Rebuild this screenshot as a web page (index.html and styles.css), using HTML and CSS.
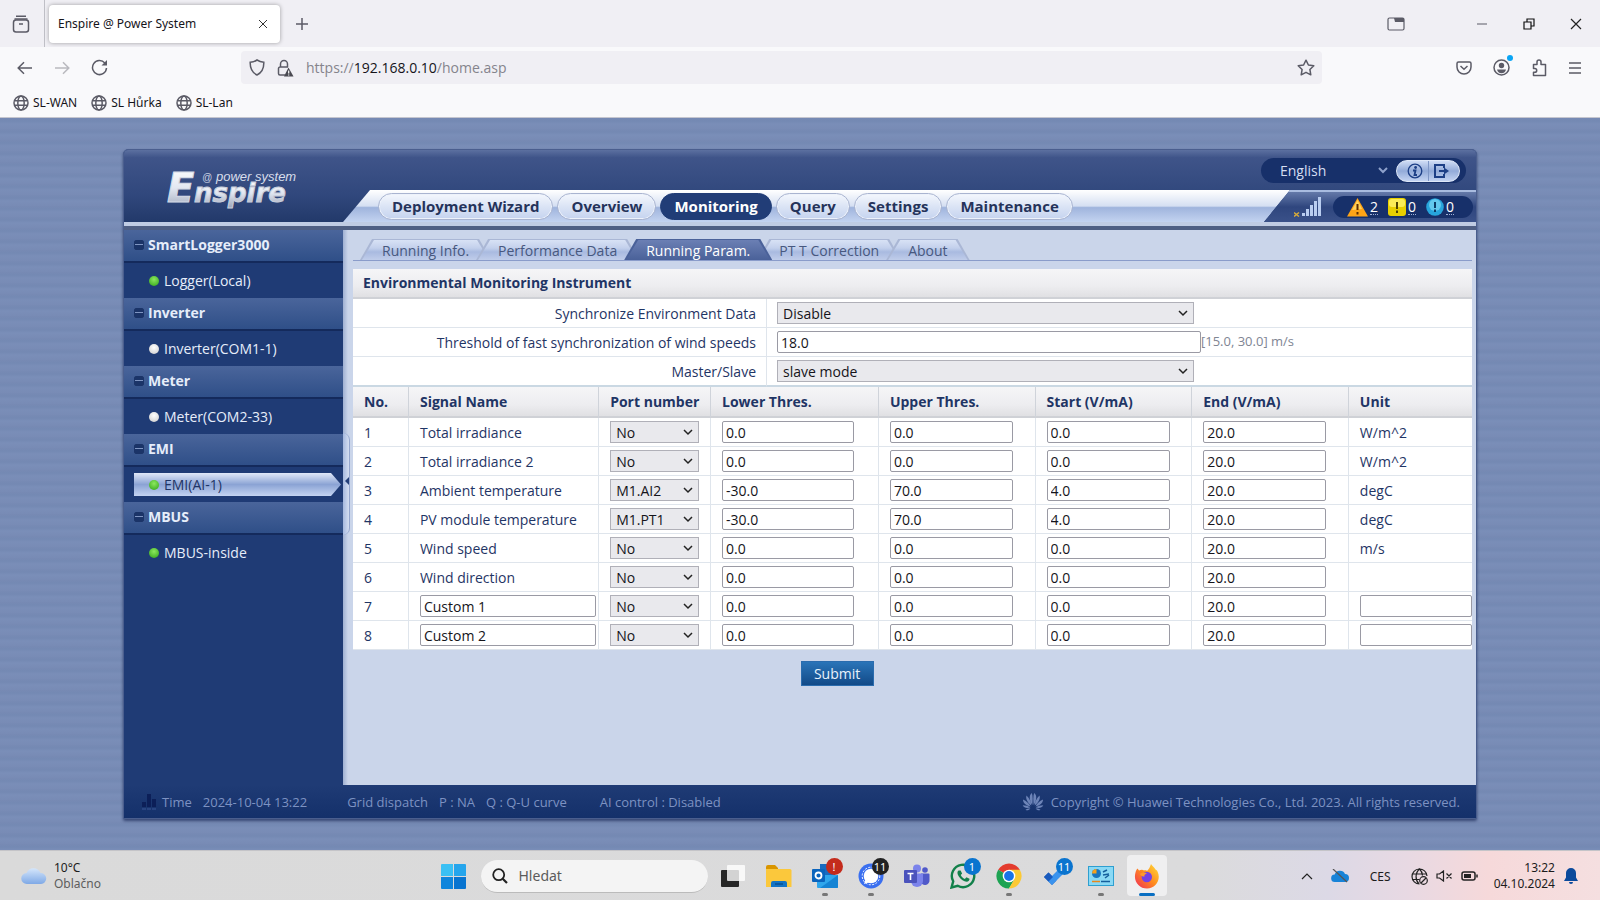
FILE: index.html
```html
<!DOCTYPE html>
<html lang="en">
<head>
<meta charset="utf-8">
<meta name="viewport" content="width=device-width, initial-scale=1.0">
<title>Enspire @ Power System</title>
<link rel="stylesheet" href="styles.css">
</head>
<body>

<!-- browser window -->
<div class="tabbar">
  <button class="icon-btn recent" aria-label="Recent tabs"><svg width="18" height="18" viewBox="0 0 18 18"><path d="M4 1.2h10M2.5 4h13" /><rect x="1.5" y="5" width="15" height="12" rx="2.5"/><path d="M7 9h4"/></svg></button>
  <div class="tab"><span>Enspire @ Power System</span><button class="icon-btn" aria-label="Close tab"><svg width="10" height="10" viewBox="0 0 10 10"><path d="M1 1l8 8M9 1L1 9"/></svg></button></div>
  <button class="icon-btn newtab" aria-label="New tab"><svg width="14" height="14" viewBox="0 0 14 14"><path d="M7 1v12M1 7h12"/></svg></button>
  <div class="window-buttons">
    <button class="icon-btn" aria-label="Firefox view"><svg width="18" height="14" viewBox="0 0 18 14"><rect x="1" y="1" width="16" height="12" rx="1.5"/><path d="M7 1h10v4H8z" fill="#5b5b66" stroke="none"/></svg></button>
    <button class="icon-btn" aria-label="Minimize"><svg width="12" height="12" viewBox="0 0 12 12"><path d="M1 6h10" stroke-width="1"/></svg></button>
    <button class="icon-btn" aria-label="Restore"><svg width="12" height="12" viewBox="0 0 12 12"><path d="M1 4h7v7H1zM4 4V1h7v7H8" stroke="#111"/></svg></button>
    <button class="icon-btn" aria-label="Close"><svg width="12" height="12" viewBox="0 0 12 12"><path d="M1 1l10 10M11 1L1 11" stroke="#222"/></svg></button>
  </div>
</div>
<div class="toolbar">
  <div class="nav-buttons">
    <button class="icon-btn" aria-label="Back"><svg width="16" height="14" viewBox="0 0 16 14"><path d="M15 7H1.5M7 1.2L1.2 7 7 12.8"/></svg></button>
    <button class="icon-btn faded" aria-label="Forward"><svg width="16" height="14" viewBox="0 0 16 14"><path d="M1 7h13.5M9 1.2L14.8 7 9 12.8"/></svg></button>
    <button class="icon-btn" aria-label="Reload"><svg width="17" height="17" viewBox="0 0 17 17"><path d="M13.8 4A7 7 0 1 0 15.5 9"/><path d="M16 1v5.5h-5.500z" fill="#5b5b66" stroke="none"/></svg></button>
  </div>
  <div class="urlbar">
    <svg width="16" height="17" viewBox="0 0 16 17"><path d="M8 1c2 1.300 4.500 2 6.800 2.200C15 9 13 13.500 8 16 3 13.500 1 9 1.200 3.200 3.500 3 6 2.300 8 1z"/></svg>
    <svg width="17" height="18" viewBox="0 0 17 18"><path d="M8 16H3a1.500 1.500 0 0 1-1.500-1.500V9.500A1.500 1.500 0 0 1 3 8h8M3.500 8V5a3.500 3.500 0 0 1 7 0v3"/><path d="M11.500 8.500l5 9h-9.500z" fill="#4a4a52" stroke="none"/><path d="M11.700 11.500v3M11.700 15.500v1" stroke="#fff" stroke-width="1.200"/></svg>
    <span class="url">https://<b>192.168.0.10</b>/home.asp</span>
    <svg width="18" height="17" viewBox="0 0 18 17"><path d="M9 1.200l2.400 4.800 5.400.8-3.900 3.700.9 5.300L9 13.300l-4.800 2.500.9-5.300L1.200 6.800 6.600 6z" stroke-linejoin="round"/></svg>
  </div>
  <div class="tool-icons">
    <button class="icon-btn" aria-label="Pocket"><svg width="16" height="14" viewBox="0 0 16 14"><path d="M2.500 1h11a1.500 1.500 0 0 1 1.500 1.500V6A7 7 0 0 1 1 6V2.500A1.500 1.500 0 0 1 2.500 1z"/><path d="M4.500 5L8 8.300 11.500 5"/></svg></button>
    <button class="icon-btn account" aria-label="Account"><svg width="17" height="17" viewBox="0 0 17 17"><circle cx="8.500" cy="8.500" r="7.500"/><g fill="#5b5b66" stroke="none"><circle cx="8.500" cy="6.500" r="2.700"/><path d="M4 10.500h9a4.600 4.600 0 0 1-9 0z"/></g></svg><i class="dot"></i></button>
    <button class="icon-btn" aria-label="Extensions"><svg width="16" height="18" viewBox="0 0 16 18"><path d="M2.500 5.500h3.500V3a2 2 0 0 1 4 0v2.500h4.500v11h-12v-3.200h1.300a1.900 1.900 0 0 0 0-3.800H2.500z" stroke-linejoin="round"/></svg></button>
    <button class="icon-btn" aria-label="Menu"><svg width="14" height="12" viewBox="0 0 14 12"><path d="M1 1h12M1 6h12M1 11h12"/></svg></button>
  </div>
</div>
<nav class="bookmarks">
  <a href="#"><svg width="16" height="16" viewBox="0 0 16 16"><circle cx="8" cy="8" r="7"/><ellipse cx="8" cy="8" rx="3.200" ry="7"/><path d="M1.500 5.700h13M1.500 10.300h13"/></svg>SL-WAN</a>
  <a href="#"><svg width="16" height="16" viewBox="0 0 16 16"><circle cx="8" cy="8" r="7"/><ellipse cx="8" cy="8" rx="3.200" ry="7"/><path d="M1.500 5.700h13M1.500 10.300h13"/></svg>SL Hůrka</a>
  <a href="#"><svg width="16" height="16" viewBox="0 0 16 16"><circle cx="8" cy="8" r="7"/><ellipse cx="8" cy="8" rx="3.200" ry="7"/><path d="M1.500 5.700h13M1.500 10.300h13"/></svg>SL-Lan</a>
</nav>

<!-- web page -->
<main class="page">
<div class="app">
  <header class="app-header">
    <div class="header-top">
      <svg class="logo" width="140" height="48" viewBox="0 0 140 48">
        <defs><linearGradient id="silver" x1="0" y1="0" x2="0" y2="1"><stop offset="0" stop-color="#fff"/><stop offset=".5" stop-color="#e2e7f1"/><stop offset="1" stop-color="#9ba4b8"/></linearGradient></defs>
        <g font-style="italic" font-weight="bold" font-family="DejaVu Sans, sans-serif">
          <text x="3" y="35" font-size="40" fill="url(#silver)" stroke="#d4dae6" stroke-width="1">E</text>
          <text x="30" y="35" font-size="26" fill="url(#silver)" stroke="#c8cedb" stroke-width="1">nspire</text>
        </g>
        <g font-style="italic" font-family="Liberation Sans, sans-serif">
          <text x="38" y="14" font-size="10" fill="#c5cde0">@</text>
          <text x="52" y="14" font-size="13" fill="#d8deeb">power system</text>
        </g>
      </svg>
      <div class="language">
        <select aria-label="Language"><option>English</option></select>
        <div class="head-buttons">
          <button aria-label="About"><svg width="16" height="16" viewBox="0 0 16 16"><circle cx="8" cy="8" r="6.800" stroke-width="1.300"/><circle cx="8.600" cy="4.500" r="1.400" fill="#1d3f86" stroke="none"/><path d="M6 7.500h2.500l-1 4.500H10" stroke-width="1.800"/></svg></button>
          <button aria-label="Log out"><svg width="16" height="16" viewBox="0 0 16 16"><path d="M11 5V2H2v12h9v-3" stroke-width="2"/><path d="M6 8h6" stroke-width="2"/><path d="M11 4.500L16 8l-5 3.500z" fill="#1d3f86" stroke="none"/></svg></button>
        </div>
      </div>
    </div>
    <div class="header-menu">
      <nav class="menu">
        <a href="#">Deployment Wizard</a>
        <a href="#">Overview</a>
        <a href="#" class="active">Monitoring</a>
        <a href="#">Query</a>
        <a href="#">Settings</a>
        <a href="#">Maintenance</a>
      </nav>
      <div class="status">
        <svg width="28" height="20" viewBox="0 0 28 20"><path d="M0 15.500l5 4M5 15.500l-5 4" stroke="#d3a93c" stroke-width="1.500"/><path d="M8 16h3v3H8zM12 12h3v7h-3zM16 8h3v11h-3zM20 4h3v15h-3zM24 0h3v19h-3z" fill="#b9cdf0"/></svg>
        <div class="alarms">
          <svg width="21" height="19" viewBox="0 0 21 19"><path d="M10.500 0L21 18.500H0z" fill="#ffa416"/><path d="M10.500 2L15 11 5 12z" fill="#ffd35c"/><path d="M10.500 6v6M10.500 14v2.500" stroke="#5c2c00" stroke-width="2"/></svg><a href="#">2</a>
          <svg width="18" height="19" viewBox="0 0 18 19"><rect width="18" height="18" rx="3" fill="#e8cf00"/><rect x="1" y="1" width="16" height="8" rx="3" fill="#fbec56"/><path d="M9 4v7M9 12.500V15" stroke="#4d4300" stroke-width="2"/></svg><a href="#">0</a>
          <svg width="18" height="18" viewBox="0 0 18 18"><circle cx="9" cy="9" r="8.800" fill="#27a5dc"/><circle cx="9" cy="7" r="6" fill="#62c9ee"/><path d="M9 4v6M9 11.500V14" stroke="#0c3c66" stroke-width="2"/></svg><a href="#">0</a>
        </div>
      </div>
    </div>
  </header>

  <div class="app-body">
    <aside class="sidebar">
      <h3><i class="minus"></i>SmartLogger3000</h3>
      <a href="#"><i class="led on"></i>Logger(Local)</a>
      <h3><i class="minus"></i>Inverter</h3>
      <a href="#"><i class="led"></i>Inverter(COM1-1)</a>
      <h3><i class="minus"></i>Meter</h3>
      <a href="#"><i class="led"></i>Meter(COM2-33)</a>
      <h3><i class="minus"></i>EMI</h3>
      <a href="#" class="selected"><i class="led on"></i>EMI(AI-1)</a>
      <h3><i class="minus"></i>MBUS</h3>
      <a href="#"><i class="led on"></i>MBUS-inside</a>
      <button class="collapse" aria-label="Collapse sidebar"></button>
    </aside>

    <section class="content">
      <nav class="subtabs">
        <a href="#"><span>Running Info.</span></a>
        <a href="#"><span>Performance Data</span></a>
        <a href="#" class="active"><span>Running Param.</span></a>
        <a href="#"><span>PT T Correction</span></a>
        <a href="#"><span>About</span></a>
      </nav>

      <h2>Environmental Monitoring Instrument</h2>
      <table class="params">
        <tr><th><label for="sync">Synchronize Environment Data</label></th><td><select id="sync"><option>Disable</option></select></td></tr>
        <tr><th><label for="wind">Threshold of fast synchronization of wind speeds</label></th><td><input id="wind" type="text" value="18.0"><span class="hint">[15.0, 30.0] m/s</span></td></tr>
        <tr><th><label for="master">Master/Slave</label></th><td><select id="master"><option>slave mode</option></select></td></tr>
      </table>

      <table class="signals">
        <colgroup><col class="c-no"><col class="c-name"><col class="c-port"><col class="c-lower"><col class="c-mid"><col class="c-mid"><col class="c-mid"><col class="c-unit"></colgroup>
        <thead>
          <tr><th>No.</th><th>Signal Name</th><th>Port number</th><th>Lower Thres.</th><th>Upper Thres.</th><th>Start (V/mA)</th><th>End (V/mA)</th><th>Unit</th></tr>
        </thead>
        <tbody>
          <tr><td>1</td><td>Total irradiance</td><td><select aria-label="Port 1"><option>No</option></select></td><td><input aria-label="Lower 1" class="wide" value="0.0"></td><td><input aria-label="Upper 1" value="0.0"></td><td><input aria-label="Start 1" value="0.0"></td><td><input aria-label="End 1" value="20.0"></td><td>W/m^2</td></tr>
          <tr><td>2</td><td>Total irradiance 2</td><td><select aria-label="Port 2"><option>No</option></select></td><td><input aria-label="Lower 2" class="wide" value="0.0"></td><td><input aria-label="Upper 2" value="0.0"></td><td><input aria-label="Start 2" value="0.0"></td><td><input aria-label="End 2" value="20.0"></td><td>W/m^2</td></tr>
          <tr><td>3</td><td>Ambient temperature</td><td><select aria-label="Port 3"><option>M1.AI2</option></select></td><td><input aria-label="Lower 3" class="wide" value="-30.0"></td><td><input aria-label="Upper 3" value="70.0"></td><td><input aria-label="Start 3" value="4.0"></td><td><input aria-label="End 3" value="20.0"></td><td>degC</td></tr>
          <tr><td>4</td><td>PV module temperature</td><td><select aria-label="Port 4"><option>M1.PT1</option></select></td><td><input aria-label="Lower 4" class="wide" value="-30.0"></td><td><input aria-label="Upper 4" value="70.0"></td><td><input aria-label="Start 4" value="4.0"></td><td><input aria-label="End 4" value="20.0"></td><td>degC</td></tr>
          <tr><td>5</td><td>Wind speed</td><td><select aria-label="Port 5"><option>No</option></select></td><td><input aria-label="Lower 5" class="wide" value="0.0"></td><td><input aria-label="Upper 5" value="0.0"></td><td><input aria-label="Start 5" value="0.0"></td><td><input aria-label="End 5" value="20.0"></td><td>m/s</td></tr>
          <tr><td>6</td><td>Wind direction</td><td><select aria-label="Port 6"><option>No</option></select></td><td><input aria-label="Lower 6" class="wide" value="0.0"></td><td><input aria-label="Upper 6" value="0.0"></td><td><input aria-label="Start 6" value="0.0"></td><td><input aria-label="End 6" value="20.0"></td><td></td></tr>
          <tr><td>7</td><td><input aria-label="Name 7" class="full" value="Custom 1"></td><td><select aria-label="Port 7"><option>No</option></select></td><td><input aria-label="Lower 7" class="wide" value="0.0"></td><td><input aria-label="Upper 7" value="0.0"></td><td><input aria-label="Start 7" value="0.0"></td><td><input aria-label="End 7" value="20.0"></td><td><input aria-label="Unit 7" class="full" value=""></td></tr>
          <tr><td>8</td><td><input aria-label="Name 8" class="full" value="Custom 2"></td><td><select aria-label="Port 8"><option>No</option></select></td><td><input aria-label="Lower 8" class="wide" value="0.0"></td><td><input aria-label="Upper 8" value="0.0"></td><td><input aria-label="Start 8" value="0.0"></td><td><input aria-label="End 8" value="20.0"></td><td><input aria-label="Unit 8" class="full" value=""></td></tr>
        </tbody>
      </table>
      <button class="submit">Submit</button>
    </section>
  </div>

  <footer class="app-footer">
    <svg width="15" height="16" viewBox="0 0 15 16"><path d="M0 8h4v5H0zM5 0h4v13H5zM10 5h4v8h-4z" fill="#0c1f58"/><path d="M0 15h4M5 15h4M10 15h4" stroke="#3a5796"/></svg>
    <span>Time</span><span class="time">2024-10-04 13:22</span>
    <span class="grid">Grid dispatch</span><span>P : NA</span><span>Q : Q-U curve</span><span class="ai">AI control : Disabled</span>
    <span class="copy"><svg width="22" height="18" viewBox="0 0 22 18"><g fill="#6d84b8"><path d="M10.300 12C7 7 7 2 9.800 0c1.200 3 1 8 .5 12zM11.700 12C15 7 15 2 12.200 0c-1.200 3-1 8-.5 12zM9.300 12.500C5 9 3.500 5.500 4.500 2.500 7.500 5 9 9 9.300 12.500zM12.700 12.500c4.300-3.500 5.800-7 4.800-10-3 2.500-4.500 6.500-4.800 10zM8.500 13.500C4 12.500 1 10 1 6.500c3.500 1.500 6 4 7.500 7zM13.500 13.500c4.500-1 7.500-3.500 7.500-7-3.500 1.500-6 4-7.500 7zM8.300 14.500c-3.500 1-6.300.5-7.600-2.300 3 0 5.600.8 7.600 2.300zM13.700 14.500c3.500 1 6.300.5 7.600-2.300-3 0-5.600.8-7.600 2.300zM8.500 15.500c-1.500 1.800-3.500 2.300-5 1.300 1.400-1 3.200-1.500 5-1.300zM13.500 15.500c1.500 1.800 3.500 2.300 5 1.300-1.400-1-3.200-1.500-5-1.300z"/></g></svg>Copyright © Huawei Technologies Co., Ltd. 2023. All rights reserved.</span>
  </footer>
</div>
</main>

<!-- windows taskbar -->
<div class="taskbar">
  <div class="weather">
    <svg width="28" height="22" viewBox="0 0 28 22"><defs><linearGradient id="cl" x1="0" y1="0" x2="0" y2="1"><stop offset="0" stop-color="#d5e6fb"/><stop offset="1" stop-color="#7fa9e6"/></linearGradient></defs><path d="M7 19a5.500 5.500 0 0 1-.5-11A7.500 7.500 0 0 1 20.500 8 5.500 5.500 0 0 1 21 19z" fill="url(#cl)"/></svg>
    <div><div>10°C</div><div class="muted">Oblačno</div></div>
  </div>
  <div class="apps">
    <button class="app-btn" aria-label="Start"><svg width="25" height="25" viewBox="0 0 25 25"><path d="M0 1a1 1 0 0 1 1-1h11v12H0z" fill="#3ac0f4"/><path d="M13 0h11a1 1 0 0 1 1 1v11H13z" fill="#25a5ec"/><path d="M0 13h12v12H1a1 1 0 0 1-1-1z" fill="#0f85dc"/><path d="M13 13h12v11a1 1 0 0 1-1 1H13z" fill="#0874d0"/></svg></button>
    <label class="search"><svg width="16" height="16" viewBox="0 0 16 16"><circle cx="6.700" cy="6.700" r="5.500"/><path d="M10.700 10.700L15 15" stroke-width="2.200"/></svg><input type="text" placeholder="Hledat" aria-label="Hledat"></label>
    <button class="app-btn" aria-label="Task view"><svg width="26" height="26" viewBox="0 0 26 26"><rect x="1" y="7" width="18" height="17" rx="1" fill="#262626"/><rect x="7" y="2" width="18" height="16" rx="1" fill="#fff" fill-opacity=".8"/></svg></button>
    <button class="app-btn" aria-label="Explorer"><svg width="26" height="26" viewBox="0 0 26 26"><path d="M0 4a2 2 0 0 1 2-2h7l3 3v6H0z" fill="#d99500"/><path d="M0 6h24a1.500 1.500 0 0 1 1.500 1.500V24H0z" fill="#fbc83c"/><path d="M5 24v-4a2 2 0 0 1 2-2h12a2 2 0 0 1 2 2v4z" fill="#1273c4"/><path d="M9 21h8" stroke="#0a4f90" stroke-width="1.500"/></svg></button>
    <button class="app-btn running" aria-label="Outlook"><svg width="26" height="26" viewBox="0 0 26 26"><rect x="8" y="1" width="15" height="17" fill="#1a6bbf"/><path d="M5 12h21v12a1 1 0 0 1-1 1H6a1 1 0 0 1-1-1z" fill="#2fa6ec"/><path d="M26 12L8 25h17a1 1 0 0 0 1-1z" fill="#1584d4"/><rect y="6" width="13" height="13" rx="1" fill="#0a64bd"/><circle cx="6.500" cy="12.500" r="3" fill="none" stroke="#fff" stroke-width="1.800"/></svg><span class="badge red">!</span></button>
    <button class="app-btn running" aria-label="Signal"><svg width="26" height="26" viewBox="0 0 26 26"><circle cx="13" cy="13" r="12.500" fill="#3a6ff0"/><circle cx="13" cy="13" r="8.800" fill="none" stroke="#fff" stroke-width="1" stroke-dasharray="2 1.500"/><circle cx="13" cy="13" r="7.300" fill="#fff"/><path d="M6 21l2-6 4 4z" fill="#fff"/></svg><span class="badge black">11</span></button>
    <button class="app-btn" aria-label="Teams"><svg width="26" height="26" viewBox="0 0 26 26"><circle cx="13" cy="5.500" r="4" fill="#7b83eb"/><circle cx="21" cy="7" r="2.800" fill="#5059c9"/><path d="M17 10.500h7.500a1 1 0 0 1 1 1V17a4.500 4.500 0 0 1-9 1z" fill="#5059c9"/><path d="M7 10.500h12V18a6 6 0 0 1-12 0z" fill="#7b83eb"/><rect y="7" width="13" height="13" rx="1" fill="#4b53bc"/><path d="M3.500 10.500h6M6.500 10.500v6.500" stroke="#fff" stroke-width="1.600"/></svg></button>
    <button class="app-btn" aria-label="WhatsApp"><svg width="26" height="26" viewBox="0 0 26 26"><path d="M1.500 24.500l1.700-6.200A11.200 11.200 0 1 1 7.700 22.800z" fill="#dcdcdc" stroke="#12804a" stroke-width="2.400"/><path d="M8.500 7.500c-1.500 1-1.500 3.500.5 6.300s5 5 7.500 5c2 0 3.200-1.500 3-3l-3-1.600-1.700 1.700c-2-.8-3.400-2.300-4-4l1.300-1.500-1.500-3z" fill="#12804a"/></svg><span class="badge blue">1</span></button>
    <button class="app-btn running" aria-label="Chrome"><svg width="26" height="26" viewBox="0 0 26 26"><path d="M13 13L2.200 6.700A12.500 12.500 0 0 1 23.800 6.700z" fill="#e33b2e"/><path d="M13 13L2.200 6.700A12.500 12.500 0 0 0 13 25.500l5.400-9z" fill="#1da353"/><path d="M13 6.700h10.800A12.500 12.500 0 0 1 13 25.500l5.400-9.400z" fill="#fcc934"/><circle cx="13" cy="13" r="6.300" fill="#fff"/><circle cx="13" cy="13" r="4.900" fill="#1a73e8"/></svg></button>
    <button class="app-btn" aria-label="To Do"><svg width="26" height="26" viewBox="0 0 26 26"><path d="M2 14l4.500-4.500 8 8L10 22z" fill="#195abd"/><path d="M10 22L24.500 7.500 20 3 5.500 17.500z" fill="#3a93ee"/><path d="M2 14l4.500-4.500 4.500 4.500-4.500 4.500z" fill="#195abd"/></svg><span class="badge blue">11</span></button>
    <button class="app-btn running" aria-label="Control panel"><svg width="26" height="20" viewBox="0 0 26 20"><rect x=".5" y=".5" width="25" height="19" fill="#8ad9f5" stroke="#2e9fd0"/><circle cx="8.500" cy="7.500" r="4.500" fill="#1976c0"/><path d="M8.500 7.500V3A4.500 4.500 0 0 0 4 7.500z" fill="#f7a11c"/><path d="M15 6l4-2M15 9l6-1M17 12l4-3" stroke="#155f9c" stroke-width="1.500"/><path d="M4 15.500h8" stroke="#e8871a" stroke-width="1.500"/><path d="M13 15.500h9" stroke="#155f9c" stroke-width="1.500"/></svg></button>
    <button class="app-btn running current" aria-label="Firefox"><svg width="26" height="26" viewBox="0 0 26 26"><defs><linearGradient id="ff" x1="1" y1="0" x2="0" y2="1"><stop offset="0" stop-color="#ffe13b"/><stop offset=".5" stop-color="#ff8a1e"/><stop offset="1" stop-color="#f0275c"/></linearGradient></defs><path d="M17 1c1 2 3 3 4.500 5.500 1 .5 1.500 1 2 2 4 8-2 17-10.500 17C5 25.500-1 18 1.500 9.500 2 7.500 2.500 6.500 3.500 5.500L5 7.500c2-1 4-1 5 0 2-.500 3 .5 3 .5 2-2 3-4 4-7z" fill="url(#ff)"/><circle cx="12.800" cy="14" r="5.200" fill="#7542e5"/><path d="M6 11c2-2 5-2 7-.5-2 .5-3 1.500-2.500 3-2 0-3.500-.5-4.500-2.500z" fill="#ff9a2e"/></svg></button>
  </div>
  <div class="tray">
    <svg width="12" height="8" viewBox="0 0 12 8"><path d="M1 7l5-5 5 5"/></svg>
    <svg class="cloud" width="18" height="14" viewBox="0 0 18 14"><path d="M4 13a3.700 3.700 0 0 1-.3-7.400A5.500 5.500 0 0 1 14 5a4 4 0 0 1 0 8z" fill="#1783d8" stroke="none"/><path d="M2 0l14 13" stroke="#555"/></svg>
    <span class="lang">CES</span>
    <svg width="17" height="17" viewBox="0 0 17 17"><path d="M8.500 16A7.500 7.500 0 1 1 16 8M1.500 6h14M1.500 11.500h7M8.500 1C4 5 4 12 8 16M8.500 1c2 2 3 4 3 6.500"/><circle cx="12.500" cy="12.500" r="3.800"/><path d="M10 15l5-5"/></svg>
    <svg width="16" height="12" viewBox="0 0 16 12"><path d="M1 4h2.500L7.500 1v10L3.500 8H1zM10.500 3.500l5 5M15.500 3.500l-5 5"/></svg>
    <svg class="battery" width="17" height="10" viewBox="0 0 17 10"><rect x="1" y="1" width="13" height="8" rx="2" stroke-width="1.500"/><rect x="3" y="3" width="7" height="4" fill="#222" stroke="none"/><path d="M16 3.500v3" stroke-width="1.500"/></svg>
    <div class="clock"><div>13:22</div><div>04.10.2024</div></div>
    <svg width="14" height="16" viewBox="0 0 14 16"><path d="M7 0a5 5 0 0 1 5 5v4.500l2 3.500H0l2-3.500V5a5 5 0 0 1 5-5zM5 14h4a2 2 0 0 1-4 0z" fill="#0b4a9c" stroke="none"/></svg>
  </div>
</div>
</body>
</html>
```

FILE: styles.css
```css
* { box-sizing: border-box; }
body {
  margin: 0;
  min-height: 100vh;
  display: flex;
  flex-direction: column;
  font-family: "Open Sans", "Noto Sans", sans-serif;
  font-size: 14px;
  color: #1f3565;
}
a { color: inherit; text-decoration: none; }
svg { display: block; flex: none; }
button { font-family: inherit; cursor: pointer; }

/* browser */
.icon-btn { border: none; background: none; padding: 0; display: flex; align-items: center; }
.icon-btn svg, .urlbar svg, .bookmarks svg, .tray svg { fill: none; stroke: #5b5b66; stroke-width: 1.5; }
.tabbar { height: 47px; background: #f0eff4; display: flex; align-items: center; }
.recent { height: 47px; width: 45px; padding-left: 12px; border-right: 1px solid #bfbfc6; }
.tab {
  width: 231px;
  height: 38px;
  margin-left: 4px;
  padding: 0 12px 0 9px;
  background: #fff;
  border-radius: 4px;
  box-shadow: 0 0 4px rgba(0,0,0,.35);
  display: flex;
  align-items: center;
  justify-content: space-between;
  font-family: "Noto Sans", sans-serif;
  font-size: 12px;
  color: #15141a;
}
.tab svg { stroke: #333; stroke-width: 1; }
.newtab { margin-left: 15px; }
.window-buttons { margin-left: auto; display: flex; align-items: center; padding-right: 18px; }
.window-buttons .icon-btn + .icon-btn { margin-left: 35px; }
.window-buttons .icon-btn:nth-child(2) { margin-left: 71px; }
.window-buttons svg { stroke-width: 1.2; }
.toolbar { height: 41px; background: #f9f9fb; display: flex; align-items: center; }
.nav-buttons { width: 241px; padding-left: 17px; display: flex; gap: 21px; }
.faded { opacity: .4; }
.urlbar {
  flex: 1;
  height: 33px;
  padding: 0 7px 0 8px;
  background: #f0eff4;
  border-radius: 4px;
  display: flex;
  align-items: center;
  gap: 12px;
}
.url { flex: 1; font-size: 14px; color: #85848c; }
.url b { font-weight: normal; color: #15141a; }
.tool-icons { width: 278px; padding-right: 18px; display: flex; justify-content: flex-end; align-items: center; gap: 21px; }
.account { position: relative; }
.dot { position: absolute; right: -3px; top: -4px; width: 6px; height: 6px; border-radius: 50%; background: #0aa5f5; }
.bookmarks {
  height: 30px;
  padding-left: 13px;
  background: #f9f9fb;
  border-bottom: 1px solid #c5c6cf;
  display: flex;
  align-items: center;
  gap: 14px;
  font-family: "Noto Sans", sans-serif;
  font-size: 12px;
  color: #15141a;
}
.bookmarks a { display: flex; align-items: center; gap: 4px; }

/* page */
.page {
  flex: 1;
  display: flex;
  padding: 31px 123px;
  background: repeating-linear-gradient(#778ab4 0, #7489b3 3px, #7a8eb8 6px, #788bb5 11px);
}
.app {
  flex: 1;
  display: flex;
  flex-direction: column;
  border: 1px solid #4a5e8e;
  border-radius: 5px 5px 2px 2px;
  box-shadow: 0 2px 3px rgba(10,25,70,.6);
  background: #1f3b75;
}
.app-header {
  background: linear-gradient(#5c70a0, #3f5489 10%, #30477c 60%, #203767);
  border-radius: 4px 4px 0 0;
  border-bottom: 4px solid #4f5f83;
}
.header-top { height: 40px; padding: 8px 10px 0 40px; display: flex; justify-content: space-between; align-items: flex-start; }
.logo { margin-top: 9px; margin-bottom: -18px; }
.language {
  width: 205px;
  height: 25px;
  padding: 0 6px 0 19px;
  border-radius: 13px;
  background: #17306a;
  display: flex;
  align-items: center;
  justify-content: space-between;
}
.language select {
  appearance: none;
  width: 108px;
  border: none;
  background: url("data:image/svg+xml,%3Csvg xmlns='http://www.w3.org/2000/svg' width='10' height='7'%3E%3Cpath d='M1 1l4 4 4-4' fill='none' stroke='%238ea1cb' stroke-width='2'/%3E%3C/svg%3E") no-repeat right center;
  color: #d5def2;
  font-family: inherit;
  font-size: 14px;
  padding: 0;
}
.head-buttons { display: flex; width: 64px; height: 22px; border-radius: 11px; background: linear-gradient(#cfdcf5, #93abd9 50%, #c3d3f2); border: 1px solid #dfe8f8; }
.head-buttons button { flex: 1; border: none; background: none; padding: 0; display: flex; align-items: center; justify-content: center; }
.head-buttons button:first-child { padding-left: 6px; }
.head-buttons button + button { padding-right: 6px; border-left: 1px solid #7f97c6; }
.head-buttons svg { fill: none; stroke: #1d3f86; }
.header-menu {
  display: flex;
  height: 36px;
  border-bottom: 4px solid #c0cce3;
}
.menu {
  flex: 1;
  margin-left: 219px;
  padding-left: 35px;
  display: flex;
  align-items: center;
  gap: 4px;
  background: linear-gradient(#fff, #d5dff2 50%, #9fb4dd 55%, #c3d3f0);
  clip-path: polygon(27px 0, 100% 0, calc(100% - 26px) 100%, 0 100%);
}
.menu a {
  height: 27px;
  padding: 0 13px;
  line-height: 24px;
  border: 1px solid #a9b4d0;
  border-radius: 14px;
  background: linear-gradient(#f4f7fd, #dbe4f5 50%, #c5d3ef);
  box-shadow: inset 0 0 0 1px #edf2fb;
  color: #25335a;
  font-size: 15px;
  font-weight: bold;
  white-space: nowrap;
}
.menu a.active { background: #213d77; border-color: #213d77; box-shadow: none; color: #fff; }
.status {
  width: 212px;
  margin-left: -26px;
  padding: 0 3px 0 30px;
  display: flex;
  align-items: center;
  justify-content: space-between;
  border-top: 2px solid #a9bce0;
  background: linear-gradient(#6479a9, #2f467e 50%, #3a5189);
  clip-path: polygon(26px 0, 100% 0, 100% 100%, 0 100%);
}
.alarms { width: 140px; height: 22px; padding: 0 14px; border-radius: 11px; background: #17306a; display: flex; align-items: center; gap: 2px; color: #fff; }
.alarms a { border-bottom: 1px dotted #9fb0d6; line-height: 15px; }
.alarms a + svg { margin-left: 8px; }

.app-body { flex: 1; display: flex; }
.sidebar { position: relative; width: 219px; background: #1f3b75; color: #e6edfa; }
.sidebar h3 {
  margin: 0;
  height: 33px;
  padding: 0 0 2px 10px;
  display: flex;
  align-items: center;
  gap: 4px;
  background: linear-gradient(#4a659b, #2f4f88);
  border-bottom: 2px solid #142a5c;
  font-size: 14px;
  font-weight: bold;
}
.sidebar a { height: 35px; padding-left: 25px; display: flex; align-items: center; gap: 5px; font-size: 14px; }
.minus { width: 10px; height: 10px; border-radius: 2px; border: 1px solid #1b3468; background: linear-gradient(#1b3468 3px, #7f95c2 3px, #7f95c2 4px, #1b3468 4px); }
.led { width: 10px; height: 10px; border-radius: 50%; background: radial-gradient(circle at 50% 35%, #fff, #c9c9c9); }
.led.on { background: radial-gradient(circle at 50% 35%, #8ce85e, #2fa316); }
.sidebar a.selected {
  height: 23px;
  margin: 6px 2px 6px 10px;
  padding-left: 15px;
  background: linear-gradient(#e0e8f8, #8ba3d4 50%, #c4d4f2);
  clip-path: polygon(0 0, calc(100% - 10px) 0, 100% 50%, calc(100% - 10px) 100%, 0 100%);
  color: #1f3565;
}
.collapse {
  position: absolute;
  left: 219px;
  top: 203px;
  width: 7px;
  height: 102px;
  padding: 0;
  border: none;
  border-right: 1px solid #95a7ce;
  border-radius: 0 7px 7px 0;
  background: linear-gradient(90deg, #a5b8de, #d5dff2);
}
.collapse::before { content: ""; position: absolute; right: 0; top: 44px; border: 4px solid transparent; border-left: 0; border-right-color: #24407a; }

.content { flex: 1; min-width: 0; padding: 9px 4px 0 10px; background: linear-gradient(90deg, #9fb0d2, #cad5ea 5px); }
.subtabs { display: flex; height: 22px; padding-left: 7px; border-bottom: 1px solid #8a9cca; margin-bottom: 8px; }
.subtabs a {
  position: relative;
  height: 21px;
  padding: 2px 22px 0;
  line-height: 20px;
  color: #47587f;
  background: #aab7d5;
  clip-path: polygon(12px 0, calc(100% - 12px) 0, 100% 100%, 0 100%);
  white-space: nowrap;
}
/* inner face, leaves a thin rim of the link's own background */
.subtabs a::before {
  content: "";
  position: absolute;
  inset: 1px 2px 0;
  background: linear-gradient(#d8e2f5, #c3d0ec 40%, #a9bae0 60%, #c0cdea);
  clip-path: polygon(12px 0, calc(100% - 12px) 0, 100% 100%, 0 100%);
}
.subtabs span { position: relative; }
.subtabs a + a { margin-left: -15px; }
.subtabs a.active { background: #4a6199; color: #fff; z-index: 1; }
.subtabs a.active::before { background: linear-gradient(#6b7fb4, #4a6199); }

h2, .signals th { background: linear-gradient(#f5f5f7, #ededf0 60%, #e0e0e3); font-weight: bold; color: #1f3565; font-size: 14px; }
h2 { margin: 0; height: 30px; line-height: 28px; padding-left: 10px; border-bottom: 2px solid #cfd1d6; }
table { width: 100%; border-collapse: separate; border-spacing: 0; table-layout: fixed; background: #fff; }
td, th { padding: 0 0 0 11px; text-align: left; height: 29px; border-bottom: 1px solid #dfe5ec; }
.params th { width: 37%; padding: 0 10px 0 0; text-align: right; font-weight: normal; border-right: 1px solid #dfe5ec; }
.params td { padding-left: 10px; white-space: nowrap; }
.params tr:last-child > * { height: 30px; border-bottom: 2px solid #cad8e3; }
.params select { width: 60%; }
.params input { width: 61%; height: 24px; }
.hint { font-size: 13px; color: #808593; }
.signals td, .signals th { border-right: 1px solid #dfe5ec; }
.signals tr > :last-child { border-right: none; }
.signals th { height: 31px; border-bottom: 2px solid #cfd1d6; border-right-color: #cfd3da; white-space: nowrap; }
.c-no { width: 5%; }
.c-name { width: 17%; }
.c-port { width: 10%; }
.c-lower { width: 15%; }
.c-mid { width: 14%; }
.c-unit { width: 11%; }
.content select, .content input {
  display: inline-block;
  vertical-align: middle;
  height: 22px;
  padding: 0 3px;
  border: 1px solid #9a9aa4;
  border-radius: 2px;
  background-color: #fff;
  color: #15141a;
  font-family: inherit;
  font-size: 14px;
}
.content select {
  appearance: none;
  padding-left: 5px;
  border-color: #b0b0b8;
  border-radius: 0;
  background: #e9e9ed url("data:image/svg+xml,%3Csvg xmlns='http://www.w3.org/2000/svg' width='10' height='7'%3E%3Cpath d='M1 1l4 4 4-4' fill='none' stroke='%23222' stroke-width='1.5'/%3E%3C/svg%3E") no-repeat right 5px center;
}
.signals select { width: 89px; }
.signals input { width: 123px; }
.signals input.wide { width: 132px; }
.signals td:nth-child(2) input { width: calc(100% - 2px); }
.signals td:last-child input { width: 100%; }
.submit {
  display: block;
  margin: 11px 0 0 40%;
  width: 73px;
  height: 25px;
  padding: 0;
  border: 1px solid #2a6cae;
  background: linear-gradient(#2a74b8, #124a88);
  color: #e8f2fc;
  font-size: 14px;
}
.app-footer {
  height: 33px;
  padding: 0 16px 0 18px;
  display: flex;
  align-items: center;
  background: linear-gradient(#1f3b75, #14306a);
  color: #7d92c2;
  font-size: 13px;
  white-space: nowrap;
}
.app-footer span { margin-left: 11px; }
.app-footer svg + span { margin-left: 5px; }
.app-footer .grid { margin-left: 40px; }
.app-footer .ai { margin-left: 33px; }
.app-footer .copy { margin-left: auto; display: flex; align-items: center; gap: 7px; }

/* taskbar */
.taskbar {
  height: 50px;
  display: grid;
  grid-template-columns: 1fr auto 1fr;
  align-items: center;
  background: linear-gradient(90deg, #dadada, #dbdbdc 75%, #dcd9e6 83%, #e8d9e3 88%, #f6d9da 93%, #f5dfe0);
  border-top: 1px solid #c4c4c8;
  font-family: "Noto Sans", sans-serif;
  font-size: 12px;
  color: #1c1c1c;
}
.weather { display: flex; align-items: center; gap: 6px; padding-left: 20px; line-height: 16px; }
.muted { color: #5d5d5d; }
.apps { display: flex; align-items: center; }
.app-btn { position: relative; width: 46px; height: 50px; border: none; background: none; padding: 0; display: flex; align-items: center; justify-content: center; }
.search { width: 227px; height: 33px; margin: 0 2px 0 4px; padding: 0 11px; border-radius: 17px; background: #f4f4f4; border-bottom: 1px solid #bbb; display: flex; align-items: center; gap: 11px; }
.search svg { fill: none; stroke: #222; stroke-width: 1.8; }
.search input { width: 100%; border: none; background: none; font-family: inherit; font-size: 14px; padding: 0; }
.search input::placeholder { color: #5b5b5b; }
.badge { position: absolute; left: 24px; top: 7px; width: 17px; height: 17px; border-radius: 50%; color: #fff; font-size: 11px; line-height: 17px; text-align: center; }
.red { background: #c42b1c; }
.black { background: #222; }
.blue { background: #0a74cf; }
.running::after { content: ""; position: absolute; left: 20px; bottom: 5px; width: 6px; height: 3px; border-radius: 2px; background: #777; }
.current::before { content: ""; position: absolute; left: 3px; top: 4px; width: 40px; height: 41px; border-radius: 4px; background: #efeff0; }
.current svg { position: relative; }
.current::after { left: 15px; width: 16px; background: #0a6fc2; }
.tray { display: flex; align-items: center; justify-content: flex-end; padding-right: 22px; }
.tray svg { stroke: #222; stroke-width: 1.2; }
.cloud { margin: 0 21px 0 18px; }
.lang { margin-right: 20px; }
.battery { margin: 0 16px 0 9px; }
.tray svg + svg:not(.cloud):not(.battery) { margin-left: 8px; }
.clock { text-align: right; line-height: 16px; margin-right: 9px; }
```
